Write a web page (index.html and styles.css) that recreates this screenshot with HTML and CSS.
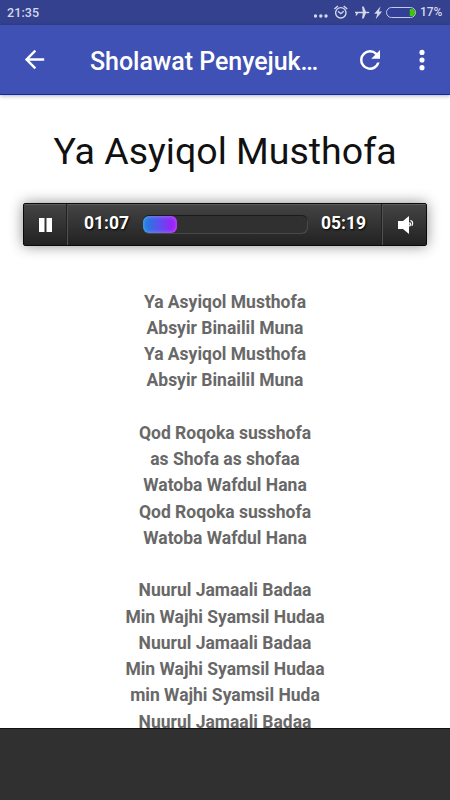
FILE: index.html
```html
<!DOCTYPE html>
<html lang="id">
<head>
    <meta charset="UTF-8">
    <meta name="viewport" content="width=device-width, initial-scale=1.0">
    <title>Sholawat Penyejuk Hati</title>
    <link rel="stylesheet" href="styles.css">
</head>
<body>
    <div class="screen">
        <!-- Status bar -->
        <div class="status-bar">
            <span class="clock">21:35</span>
            <svg class="status-icons" width="106" height="25" viewBox="0 0 106 25">
                <g fill="#d5d8ea">
                    <circle cx="2.5" cy="16" r="1.7"/>
                    <circle cx="7.8" cy="16" r="1.7"/>
                    <circle cx="13" cy="16" r="1.7"/>
                    <path d="M42 11.7h7.8L49 6.4h1.7l2.2 5.3h2.7q1.8.8 0 1.6h-2.7l-2.2 5.3H49l.8-5.3H45l-1.2 2.2h-1.2l.4-2.2-1-.2z"/>
                    <path d="M67.6 6.3l-6.3 7.5h3l-1.6 5.4 6.4-7.8h-3.2z"/>
                </g>
                <g fill="none" stroke="#d5d8ea" stroke-width="1.4">
                    <circle cx="27.8" cy="12.8" r="5.2"/>
                    <path d="M21.4 9l3.5-3.1M34.2 9l-3.5-3.1M25 11.3l2.8 2.4 2.9-2.4"/>
                </g>
                <rect x="73.5" y="7.5" width="29" height="10" rx="5" fill="#303f9f" fill-opacity=".4" stroke="#c3c8ec"/>
                <path d="M96.8 8.9h1.7a3.6 3.6 0 0 1 0 7.2h-1.7z" fill="#3fc800"/>
            </svg>
            <span class="battery-text">17%</span>
        </div>
        <!-- App bar -->
        <header class="app-bar">
            <svg class="back" width="29" height="29" viewBox="0 0 24 24"><path d="M20 11H7.83l5.59-5.59L12 4l-8 8 8 8 1.41-1.41L7.83 13H20v-2z"/></svg>
            <h1>Sholawat Penyejuk…</h1>
            <svg class="refresh" width="30" height="30" viewBox="0 0 24 24"><path d="M17.65 6.35A7.958 7.958 0 0 0 12 4a8 8 0 1 0 7.73 10h-2.08A6 6 0 1 1 12 6c1.66 0 3.14.69 4.22 1.78L13 11h7V4l-2.35 2.35z"/></svg>
            <svg class="more" width="30" height="30" viewBox="0 0 24 24"><circle cx="12" cy="5.9" r="2.05"/><circle cx="12" cy="12" r="2.05"/><circle cx="12" cy="18.1" r="2.05"/></svg>
        </header>
        <!-- Song -->
        <main class="content">
            <h2>Ya Asyiqol Musthofa</h2>
            <div class="player">
                <div class="playpause">
                    <svg width="13" height="14" viewBox="0 0 13 14"><path d="M0 0h5.5v14H0zM7.5 0H13v14H7.5z"/></svg>
                </div>
                <div class="scrubber">
                    <span class="time">01:07</span>
                    <div class="track"><div class="progress" style="width: 21%"></div></div>
                    <span class="time">05:19</span>
                </div>
                <div class="volume">
                    <svg width="16" height="18" viewBox="0 0 16 18"><path d="M0 5h5l6-5v18l-6-5H0z"/><path class="wave" d="M11.5 6.6q1.8 1.6 0 3.8M12.4 4.3q3.4 1.2 1.5 5.4"/></svg>
                </div>
            </div>
            <div class="lyrics">
                <p>Ya Asyiqol Musthofa<br>
                Absyir Binailil Muna<br>
                Ya Asyiqol Musthofa<br>
                Absyir Binailil Muna</p>
                <p>Qod Roqoka susshofa<br>
                as Shofa as shofaa<br>
                Watoba Wafdul Hana<br>
                Qod Roqoka susshofa<br>
                Watoba Wafdul Hana</p>
                <p>Nuurul Jamaali Badaa<br>
                Min Wajhi Syamsil Hudaa<br>
                Nuurul Jamaali Badaa<br>
                Min Wajhi Syamsil Hudaa<br>
                min Wajhi Syamsil Huda<br>
                Nuurul Jamaali Badaa</p>
            </div>
        </main>
        <div class="ad-space"></div>
    </div>
</body>
</html>
```

FILE: styles.css
```css
* {
    box-sizing: border-box;
}
body {
    margin: 0;
    font-family: Roboto, sans-serif;
    background: #fff;
}
.screen {
    width: 450px;
    height: 800px;
    display: flex;
    flex-direction: column;
    overflow: hidden;
}
.status-bar {
    flex: none;
    height: 25px;
    padding: 0 8px 0 7px;
    display: flex;
    align-items: center;
    background: #33418f;
    color: #d5d8ea;
    font-size: 12.5px;
    font-weight: 500;
    line-height: 25px;
}
.clock {
    letter-spacing: 0.1px;
}
.status-icons {
    margin-left: auto;
}
.battery-text {
    width: 22px;
    margin-left: 1px;
    font-size: 12px;
    letter-spacing: -0.1px;
    white-space: nowrap;
}
.app-bar {
    flex: none;
    position: relative;
    height: 70px;
    padding: 0 13px 0 20px;
    display: flex;
    align-items: center;
    background: #3f51b5;
    border-bottom: 1px solid #0a2bb0;
    box-shadow: 0 1px 4px rgba(0,0,0,0.3);
    color: #fff;
}
.app-bar svg {
    flex: none;
    fill: #fff;
}
.app-bar h1 {
    flex: 1;
    margin: 5px 0 0 41px;
    font-size: 25px;
    font-weight: 500;
    line-height: 32px;
    letter-spacing: -0.05px;
    white-space: nowrap;
}
.more {
    margin-left: 22px;
}
.content {
    flex: 1;
    min-height: 0;
    padding: 0 23px;
    overflow: hidden;
    text-align: center;
}
.content h2 {
    margin: 31px 0 0;
    font-size: 37.5px;
    font-weight: 400;
    line-height: 50px;
    color: #111;
    white-space: nowrap;
}
.player {
    height: 43px;
    margin: 27px 0 42.5px;
    display: flex;
    background: linear-gradient(#444, #222);
    border: 1px solid #0a0a0a;
    border-radius: 2px;
    box-shadow: inset 0 1px 0 #5d5d5d, 0 0 14px rgba(0,0,0,0.45);
}
.player svg {
    fill: #fff;
}
.playpause, .volume {
    flex: none;
    width: 44px;
    display: flex;
    align-items: center;
    justify-content: center;
}
.playpause {
    width: 43px;
    border-right: 1px solid #222;
    box-shadow: 1px 0 0 #505050;
}
.volume {
    padding-left: 2px;
    border-left: 1px solid #505050;
    box-shadow: -1px 0 0 #222;
}
.volume .wave {
    fill: none;
    stroke: #fff;
    stroke-width: 1.3;
}
.scrubber {
    flex: 1;
    display: flex;
    align-items: center;
    justify-content: space-between;
    padding: 0 16px 0 17px;
}
.time {
    color: #fff;
    font-size: 17.5px;
    font-weight: 700;
    line-height: 38px;
    margin-bottom: 3px;
    text-shadow: 1px 1px 2px #000;
}
.track {
    width: 165px;
    height: 19px;
    padding: 1px 1px 1px 0;
    background: #303030;
    border-radius: 6px;
    box-shadow: inset 0 1px 0 #1b1b1b, inset -1px -1px 0 #484848;
}
.progress {
    height: 17px;
    border-radius: 6px;
    background: linear-gradient(90deg, #1685e0, #aa16fc);
    box-shadow: inset 0 0 4px rgba(255,255,255,0.35);
}
.lyrics {
    color: #686868;
    font-size: 17.5px;
    font-weight: 700;
    line-height: 26.25px;
}
.lyrics p {
    margin: 0 0 26.25px;
}
.ad-space {
    flex: none;
    height: 72px;
    background: #303030;
    border-top: 1px solid #111;
}
```
